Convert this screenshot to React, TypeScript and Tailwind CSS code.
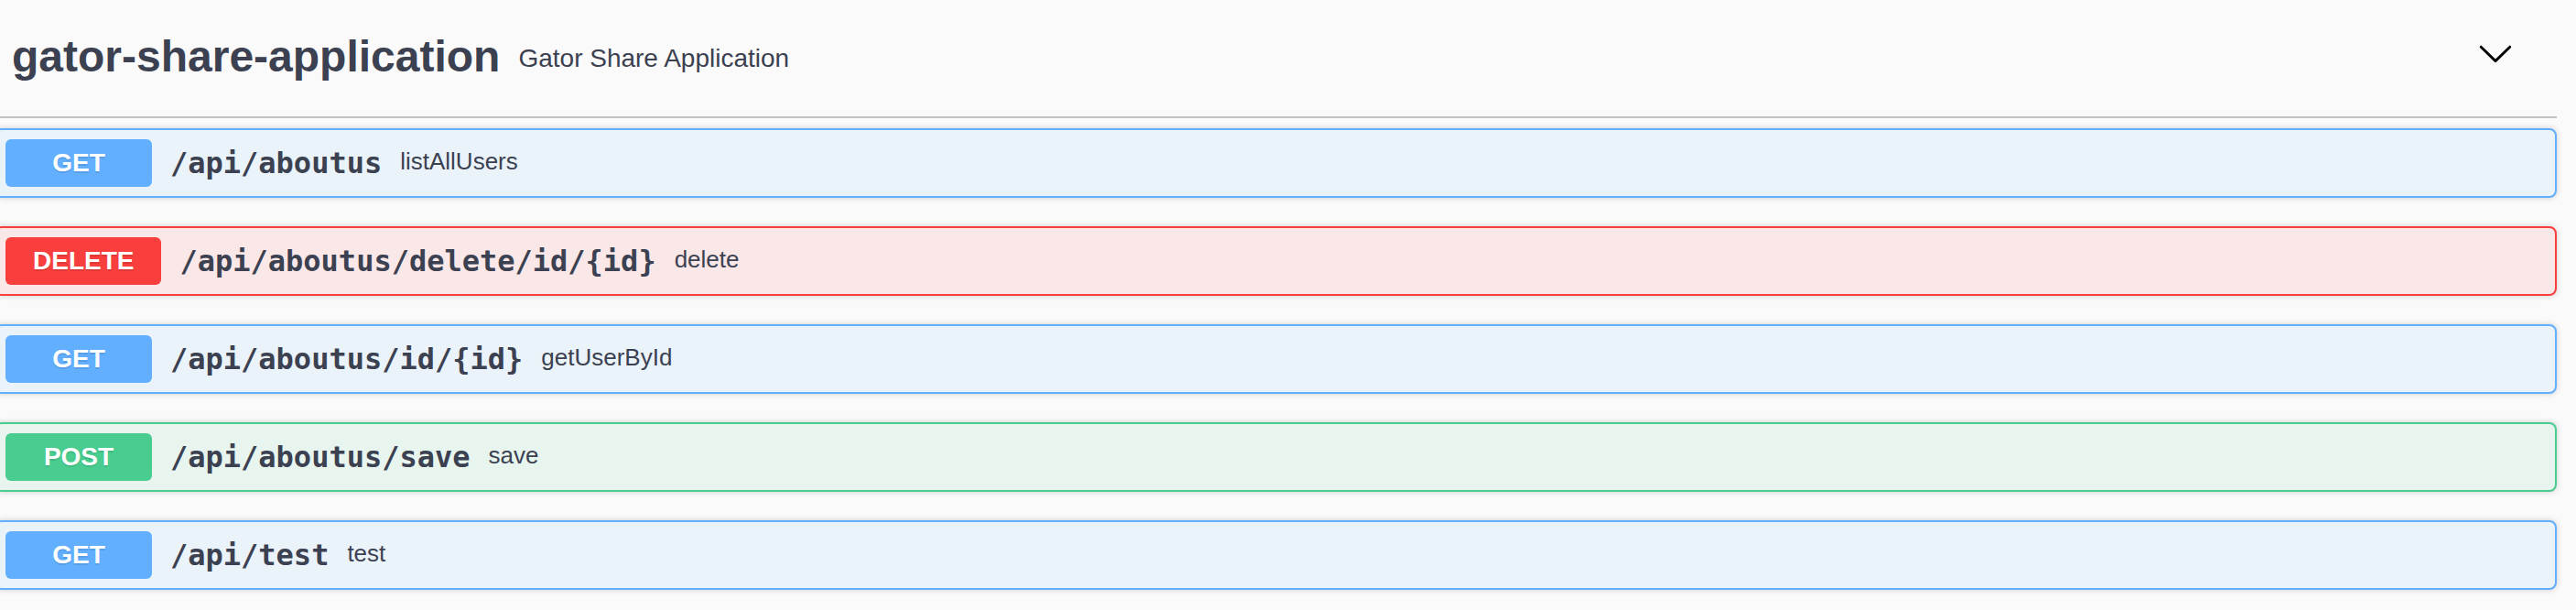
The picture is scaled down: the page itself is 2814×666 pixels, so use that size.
// Swagger-style tag section: one collapsible tag header followed by the
// operation summaries (method badge, monospace path, operation id).

type Method = "GET" | "POST" | "DELETE";

const METHOD_STYLES: Record<Method, { block: string; badge: string }> = {
  GET: { block: "border-[#61affe] bg-[#ebf3fa]", badge: "bg-[#61affe]" },
  POST: { block: "border-[#49cc90] bg-[#e8f5ef]", badge: "bg-[#49cc90]" },
  DELETE: { block: "border-[#f93e3e] bg-[#fae7e7]", badge: "bg-[#f93e3e]" },
};

const OPERATIONS: { method: Method; path: string; summary: string }[] = [
  { method: "GET", path: "/api/aboutus", summary: "listAllUsers" },
  { method: "DELETE", path: "/api/aboutus/delete/id/{id}", summary: "delete" },
  { method: "GET", path: "/api/aboutus/id/{id}", summary: "getUserById" },
  { method: "POST", path: "/api/aboutus/save", summary: "save" },
  { method: "GET", path: "/api/test", summary: "test" },
];

function Arrow() {
  return (
    <svg width="40" height="40" viewBox="0 0 20 20" className="fill-black">
      <path d="M17.418 6.109c.272-.268.709-.268.979 0s.271.701 0 .969l-7.908 7.83c-.27.268-.707.268-.979 0l-7.908-7.83c-.27-.268-.27-.701 0-.969.271-.268.709-.268.979 0L10 13.25l7.418-7.141z" />
    </svg>
  );
}

function OperationRow({ method, path, summary }: { method: Method; path: string; summary: string }) {
  const s = METHOD_STYLES[method];
  return (
    <div
      className={`mb-[31px] flex items-center rounded-[8px] border-2 p-[10px] shadow-[0_0_6px_rgba(0,0,0,0.19)] ${s.block}`}
    >
      <span
        className={`flex h-[52px] min-w-[160px] items-center justify-center rounded-[6px] px-[30px] text-[28px] font-bold text-white [text-shadow:0_2px_0_rgba(0,0,0,0.1)] ${s.badge}`}
      >
        {method}
      </span>
      <span className="px-[20px] font-['DejaVu_Sans_Mono',monospace] text-[32px] font-bold text-[#3b4151]">
        {path}
      </span>
      <span className="flex-1 pb-[4px] text-[26px] text-[#3b4151]">{summary}</span>
    </div>
  );
}

export default function App() {
  return (
    <div className="h-[666px] w-full overflow-hidden bg-[#fafafa] font-['Liberation_Sans',Arial,sans-serif]">
      <div className="-ml-[6px] mr-[21px]">
        <div className="flex h-[129px] items-center border-b-2 border-[#c1c2c7]">
          <span className="pb-[4px] pl-[19px] text-[48px] font-bold text-[#3b4151]">gator-share-application</span>
          <span className="flex-1 px-[20px] text-[28px] text-[#3b4151]">Gator Share Application</span>
          <button className="mb-[11px] mr-[47px]">
            <Arrow />
          </button>
        </div>
        <div className="mt-[11px]">
          {OPERATIONS.map((op) => (
            <OperationRow key={op.method + op.path} {...op} />
          ))}
        </div>
      </div>
    </div>
  );
}
